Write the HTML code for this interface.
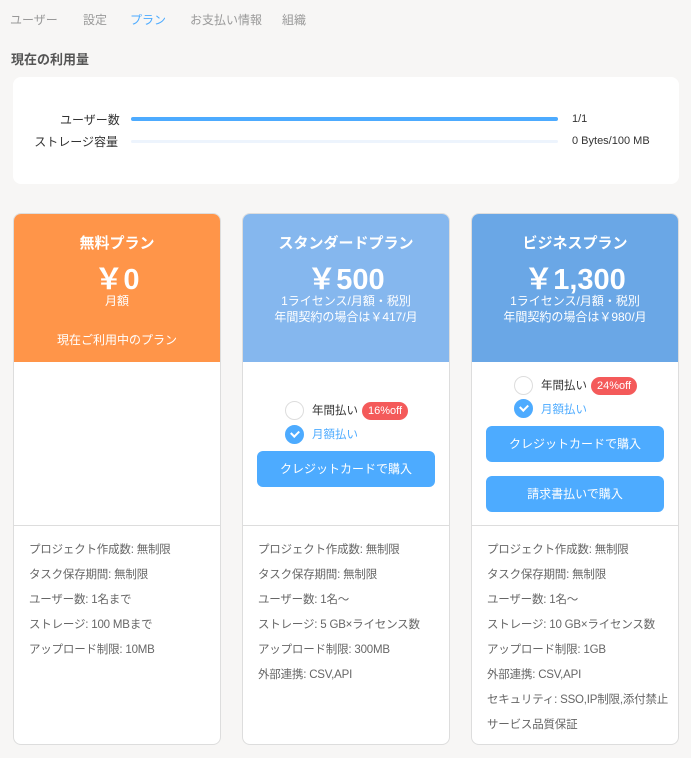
<!DOCTYPE html>
<html><head><meta charset="utf-8"><style>
*{margin:0;padding:0;box-sizing:border-box}
body{width:691px;height:758px;background:#f7f6f5;font-family:"Liberation Sans","Noto Sans CJK JP",sans-serif;position:relative;overflow:hidden;color:#555}
.a{position:absolute;white-space:nowrap}
.tab{top:11px;font-size:12px;color:#999}
.card{position:absolute;top:213px;width:208px;height:532px;background:#fff;border:1px solid #ddd;border-radius:8px;overflow:hidden}
.hd{position:absolute;left:0;top:0;width:100%;height:148px;color:#fff;text-align:center}
.hd .t{position:absolute;width:100%;top:18px;font-size:15px;font-weight:bold}
.hd .p{position:absolute;width:100%;top:42px;font-size:29px;font-weight:bold}
.hd .s{position:absolute;width:100%;font-size:12px;line-height:16px}
.div{position:absolute;left:0;top:311px;width:100%;border-top:1px solid #ddd}
.f{position:absolute;left:15px;font-size:11.5px;color:#666;white-space:nowrap;letter-spacing:-0.2px}
.btn{position:absolute;left:14px;width:178px;height:36px;background:#4dabff;border-radius:6px;color:#fff;font-size:12px;text-align:center;line-height:36px}
.rad{position:absolute;width:19px;height:19px;border-radius:50%;border:1px solid #ddd;background:#fff}
.rad.on{background:#4dabff;border-color:#4dabff}
.rad.on:after{content:"";position:absolute;left:5px;top:4px;width:6px;height:4px;border-left:2px solid #fff;border-bottom:2px solid #fff;transform:rotate(-45deg)}
.lb{position:absolute;font-size:11.5px;color:#333;white-space:nowrap}
.badge{position:absolute;background:#f45a5a;color:#fff;font-size:11px;height:18px;line-height:18px;padding:0 6px;border-radius:9px}
</style></head><body>
<div class="a tab" style="left:10px">ユーザー</div>
<div class="a tab" style="left:83px">設定</div>
<div class="a tab" style="left:130px;color:#4dabff">プラン</div>
<div class="a tab" style="left:190px">お支払い情報</div>
<div class="a tab" style="left:282px">組織</div>
<div class="a" style="left:11px;top:49px;font-size:13px;font-weight:bold;color:#555">現在の利用量</div>
<div class="a" style="left:13px;top:77px;width:666px;height:107px;background:#fff;border-radius:8px"></div>
<div class="a" style="left:60px;top:111px;font-size:12px;color:#333;width:58px;text-align:right">ユーザー数</div>
<div class="a" style="left:20px;top:133px;font-size:12px;color:#333;width:98px;text-align:right">ストレージ容量</div>
<div class="a" style="left:131px;top:117px;width:427px;height:4px;background:#4dabff;border-radius:2px"></div>
<div class="a" style="left:131px;top:140px;width:427px;height:3px;background:#edf4fd;border-radius:2px"></div>
<div class="a" style="left:572px;top:113px;font-size:11px;color:#333">1/1</div>
<div class="a" style="left:572px;top:135px;font-size:11px;color:#333">0 Bytes/100 MB</div>

<div class="card" style="left:13px">
 <div class="hd" style="background:#ff9549">
  <div class="t">無料プラン</div><div class="p">￥0</div>
  <div class="s" style="top:79px">月額</div>
  <div class="s" style="top:118px">現在ご利用中のプラン</div>
 </div>
 <div class="div"></div>
 <div class="f" style="top:327px">プロジェクト作成数: 無制限</div>
 <div class="f" style="top:352px">タスク保存期間: 無制限</div>
 <div class="f" style="top:377px">ユーザー数: 1名まで</div>
 <div class="f" style="top:402px">ストレージ: 100 MBまで</div>
 <div class="f" style="top:427px">アップロード制限: 10MB</div>
</div>

<div class="card" style="left:242px">
 <div class="hd" style="background:#85b7ee">
  <div class="t">スタンダードプラン</div><div class="p">￥500</div>
  <div class="s" style="top:79px">1ライセンス/月額・税別<br>年間契約の場合は￥417/月</div>
 </div>
 <div class="rad" style="left:42px;top:187px"></div>
 <div class="lb" style="left:69px;top:188px">年間払い</div>
 <div class="badge" style="left:119px;top:188px">16%off</div>
 <div class="rad on" style="left:42px;top:211px"></div>
 <div class="lb" style="left:69px;top:212px;color:#4dabff">月額払い</div>
 <div class="btn" style="top:237px">クレジットカードで購入</div>
 <div class="div"></div>
 <div class="f" style="top:327px">プロジェクト作成数: 無制限</div>
 <div class="f" style="top:352px">タスク保存期間: 無制限</div>
 <div class="f" style="top:377px">ユーザー数: 1名～</div>
 <div class="f" style="top:402px">ストレージ: 5 GB×ライセンス数</div>
 <div class="f" style="top:427px">アップロード制限: 300MB</div>
 <div class="f" style="top:452px">外部連携: CSV,API</div>
</div>

<div class="card" style="left:471px">
 <div class="hd" style="background:#6aa7e6">
  <div class="t">ビジネスプラン</div><div class="p">￥1,300</div>
  <div class="s" style="top:79px">1ライセンス/月額・税別<br>年間契約の場合は￥980/月</div>
 </div>
 <div class="rad" style="left:42px;top:162px"></div>
 <div class="lb" style="left:69px;top:163px">年間払い</div>
 <div class="badge" style="left:119px;top:163px">24%off</div>
 <div class="rad on" style="left:42px;top:185px"></div>
 <div class="lb" style="left:69px;top:187px;color:#4dabff">月額払い</div>
 <div class="btn" style="top:212px">クレジットカードで購入</div>
 <div class="btn" style="top:262px">請求書払いで購入</div>
 <div class="div"></div>
 <div class="f" style="top:327px">プロジェクト作成数: 無制限</div>
 <div class="f" style="top:352px">タスク保存期間: 無制限</div>
 <div class="f" style="top:377px">ユーザー数: 1名～</div>
 <div class="f" style="top:402px">ストレージ: 10 GB×ライセンス数</div>
 <div class="f" style="top:427px">アップロード制限: 1GB</div>
 <div class="f" style="top:452px">外部連携: CSV,API</div>
 <div class="f" style="top:477px">セキュリティ: SSO,IP制限,添付禁止</div>
 <div class="f" style="top:502px">サービス品質保証</div>
</div>
</body></html>
